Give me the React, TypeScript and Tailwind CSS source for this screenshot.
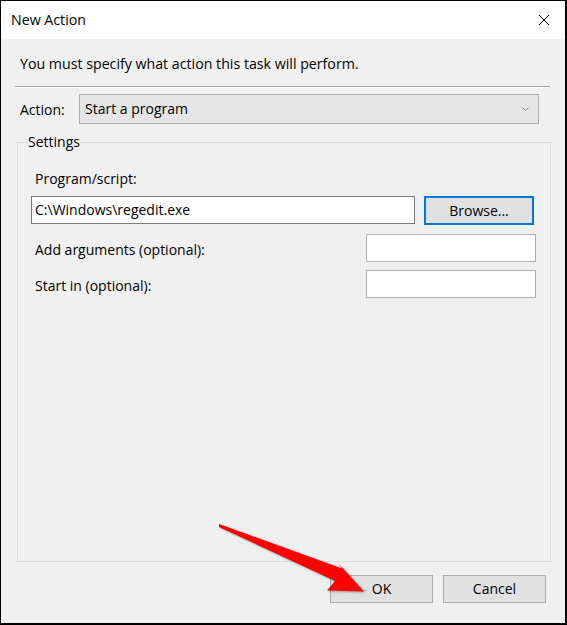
import React from "react";

const font = { fontFamily: '"Open Sans", "Noto Sans", sans-serif' };

export default function App() {
  return (
    <div
      className="relative w-[567px] h-[625px] bg-[#f0f0f0] border-black border-l border-t border-r-2 border-b-2 flex flex-col text-[14px] text-black overflow-hidden"
      style={font}
    >
      {/* Title bar */}
      <div className="h-[38px] bg-white flex items-center justify-between shrink-0">
        <span className="ml-[10px] text-[14.2px] leading-[20px]">New Action</span>
        <svg width="12" height="12" viewBox="0 0 12 12" className="mr-[15px]">
          <path d="M1 1 L11 11 M11 1 L1 11" stroke="#000" strokeWidth="1" fill="none" />
        </svg>
      </div>

      {/* Intro text */}
      <div className="mt-[15px] ml-[19px] h-[20px] leading-[20px] text-[14.2px]">
        You must specify what action this task will perform.
      </div>

      {/* Separator */}
      <div className="mt-[12px] ml-[14px] w-[535px] h-[2px] border-t border-b border-t-[#a0a0a0] border-b-white" />

      {/* Action row */}
      <div className="mt-[6px] ml-[19px] flex items-center h-[30px]">
        <span className="w-[59px] leading-[20px] mt-[2px]">Action:</span>
        <div className="w-[460px] h-[30px] bg-[#e5e5e5] border border-[#adadad] flex items-center justify-between pl-[5px] pr-[9px]">
          <span className="leading-[20px]">Start a program</span>
          <svg width="7" height="4" viewBox="0 0 7 4">
            <path d="M0.5 0.5 L3.5 3.5 L6.5 0.5" stroke="#8a8a8a" strokeWidth="1" fill="none" />
          </svg>
        </div>
      </div>

      {/* Settings group */}
      <fieldset className="mt-[8px] ml-[16px] w-[534px] h-[430px] border border-[#dcdcdc] flex flex-col">
        <legend className="ml-[9px] px-[1px] leading-[20px]">Settings</legend>

        <div className="mt-[17px] ml-[17px] leading-[20px] h-[20px]">Program/script:</div>

        <div className="mt-[7px] ml-[13px] flex items-start">
          <div className="w-[384px] h-[28px] bg-white border border-[#7a7a7a] flex items-center pl-[3px] leading-[20px]">
            C:\Windows\regedit.exe
          </div>
          <div className="ml-[9px] w-[110px] h-[29px] bg-[#e1e1e1] border-2 border-[#0078d7] flex items-center justify-center leading-[20px]">
            Browse...
          </div>
        </div>

        <div className="mt-[9px] flex items-center justify-between h-[28px]">
          <span className="ml-[17px] leading-[20px] mt-[3px]">Add arguments (optional):</span>
          <div className="mr-[14px] w-[170px] h-[28px] bg-white border border-[#adadad]" />
        </div>

        <div className="mt-[8px] flex items-center justify-between h-[28px]">
          <span className="ml-[17px] leading-[20px] mt-[3px]">Start in (optional):</span>
          <div className="mr-[14px] w-[170px] h-[28px] bg-white border border-[#adadad]" />
        </div>
      </fieldset>

      {/* Buttons */}
      <div className="mt-[13px] mr-[19px] flex justify-end gap-[10px]">
        <div className="w-[103px] h-[28px] bg-[#e1e1e1] border border-[#adadad] flex items-center justify-center leading-[20px]">
          OK
        </div>
        <div className="w-[103px] h-[28px] bg-[#e1e1e1] border border-[#adadad] flex items-center justify-center leading-[20px]">
          Cancel
        </div>
      </div>

      {/* Red arrow annotation */}
      <svg
        className="absolute left-0 top-0 pointer-events-none"
        width="567"
        height="625"
        viewBox="0 0 567 625"
        style={{ filter: "drop-shadow(1px 1px 1px rgba(0,0,0,0.35))" }}
      >
        <polygon
          points="218,523 341,567.5 337,562 363,590.5 326,589.5 334,580 218,526"
          fill="#ff0000"
        />
      </svg>
    </div>
  );
}
